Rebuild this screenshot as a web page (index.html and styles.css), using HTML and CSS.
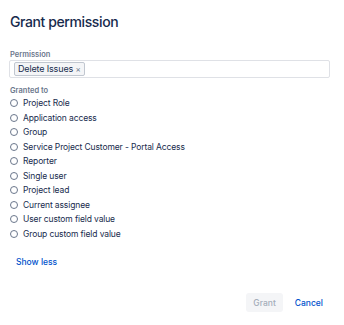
FILE: index.html
```html
<!DOCTYPE html>
<html>
<head>
<meta charset="utf-8">
<link rel="stylesheet" href="styles.css">
</head>
<body>
<div class="dialog">
  <h1 class="title">Grant permission</h1>
  <div class="field">
    <label class="label">Permission</label>
    <div class="input">
      <span class="tag">Delete Issues <span class="x">×</span></span>
    </div>
  </div>
  <div class="field granted">
    <label class="label">Granted to</label>
    <ul class="radios">
      <li><span class="radio"></span>Project Role</li>
      <li><span class="radio"></span>Application access</li>
      <li><span class="radio"></span>Group</li>
      <li><span class="radio"></span>Service Project Customer - Portal Access</li>
      <li><span class="radio"></span>Reporter</li>
      <li><span class="radio"></span>Single user</li>
      <li><span class="radio"></span>Project lead</li>
      <li><span class="radio"></span>Current assignee</li>
      <li><span class="radio"></span>User custom field value</li>
      <li><span class="radio"></span>Group custom field value</li>
    </ul>
  </div>
  <a class="show-less">Show less</a>
  <div class="footer">
    <button class="btn grant">Grant</button>
    <button class="btn cancel">Cancel</button>
  </div>
</div>
</body>
</html>
```
FILE: styles.css
```css
html, body { margin: 0; padding: 0; background: #fff; }
body { font-family: Inter, "Liberation Sans", Arial, sans-serif; color: #172b4d; }
.dialog { padding: 12px 14px 0 10px; width: 320px; }
.title { margin: 0; font-size: 14px; font-weight: 500; line-height: 20px; letter-spacing: -0.4px; color: #172b4d; }
.field { margin-top: 18px; }
.label { display: block; font-size: 7.5px; font-weight: 600; color: #6b778c; line-height: 10px; }
.input { margin-top: 0; margin-left: -1px; height: 14px; border: 1px solid #dfe1e6; border-radius: 2px; padding: 1px 4px; display: flex; align-items: center; }
.tag { font-size: 9px; line-height: 12px; letter-spacing: -0.15px; background: #f4f5f7; border: 1px solid #c1c7d0; border-radius: 2px; padding: 0 3px; color: #172b4d; }
.tag .x { font-size: 8px; color: #6b778c; }
.granted { margin-top: 8px; }
.radios { list-style: none; margin: 0; padding: 0; }
.radios li { display: flex; align-items: center; height: 14.5px; font-size: 8.5px; letter-spacing: -0.12px; color: #172b4d; }
.radio { width: 6px; height: 6px; border: 1px solid #6b778c; border-radius: 50%; margin-right: 5px; margin-left: 0; }
.show-less { display: block; margin: 15px 0 0 6px; font-size: 8.5px; font-weight: 500; color: #0052cc; line-height: 12px; }
.footer { display: flex; justify-content: flex-end; align-items: center; gap: 5px; margin-top: 25px; }
.btn { font-family: inherit; font-size: 8.5px; font-weight: 500; border: none; border-radius: 3px; height: 19px; padding: 0 7px; background: transparent; }
.grant { background: #f4f5f7; color: #a5adba; }
.cancel { color: #0052cc; }
```
